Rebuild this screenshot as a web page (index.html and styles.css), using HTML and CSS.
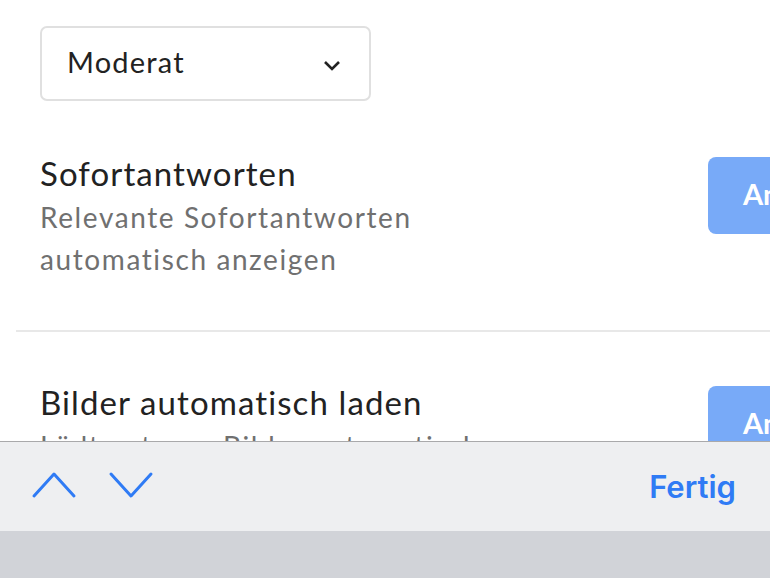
FILE: index.html
```html
<!DOCTYPE html>
<html lang="de">
<head>
  <meta charset="UTF-8">
  <meta name="viewport" content="width=device-width, initial-scale=1.0">
  <title>Einstellungen</title>
  <link rel="stylesheet" href="styles.css">
</head>
<body>
  <div class="content">
    <div class="select-box">
      <span>Moderat</span>
      <svg class="caret" width="18" height="12" viewBox="0 0 18 12"><path d="M2 3 L9 10 L16 3" fill="none" stroke="#222" stroke-width="2.6"/></svg>
    </div>
    <div class="settings">
      <div class="setting">
        <div class="setting-text">
          <div class="setting-title">Sofortantworten</div>
          <div class="setting-desc">Relevante Sofortantworten<br>automatisch anzeigen</div>
        </div>
        <button class="toggle">An</button>
      </div>
      <div class="setting divided">
        <div class="setting-text">
          <div class="setting-title">Bilder automatisch laden</div>
          <div class="setting-desc">Lädt externe Bilder automatisch</div>
        </div>
        <button class="toggle">An</button>
      </div>
    </div>
  </div>
  <div class="toolbar">
    <div class="nav-arrows">
      <svg width="46" height="28" viewBox="0 0 46 28"><path d="M3 25 L23 3 L43 25" fill="none" stroke="#2f7bf5" stroke-width="3" stroke-linecap="round" stroke-linejoin="round"/></svg>
      <svg width="46" height="28" viewBox="0 0 46 28"><path d="M3 3 L23 25 L43 3" fill="none" stroke="#2f7bf5" stroke-width="3" stroke-linecap="round" stroke-linejoin="round"/></svg>
    </div>
    <button class="done">Fertig</button>
  </div>
  <div class="keyboard"></div>
</body>
</html>
```

FILE: styles.css
```css
body {
  margin: 0;
  padding: 0;
  width: 770px;
  height: 578px;
  overflow: hidden;
  font-family: Lato, "Open Sans", sans-serif;
  background-color: #fff;
}
.content {
  height: 441px;
  overflow: hidden;
  padding-top: 26px;
  box-sizing: border-box;
}
.select-box {
  margin-left: 40px;
  width: 331px;
  height: 75px;
  box-sizing: border-box;
  border: 2px solid #e0e0e0;
  border-radius: 7px;
  display: flex;
  align-items: center;
  justify-content: space-between;
  padding: 0 28px 0 25px;
  font-size: 29px;
  letter-spacing: 1.2px;
  color: #222;
}
.select-box span {
  margin-top: -4px;
}
.caret {
  margin-top: 2px;
}
.settings {
  margin-left: 16px;
}
.setting {
  display: flex;
  justify-content: space-between;
  align-items: flex-start;
  padding: 52px 0 50px 24px;
}
.setting.divided {
  border-top: 2px solid #e8e8e8;
  padding-top: 50px;
}
.setting-title {
  font-size: 33px;
  line-height: 40px;
  letter-spacing: 1.1px;
  color: #222;
  margin-bottom: 3px;
}
.setting-desc {
  font-size: 28px;
  line-height: 42px;
  letter-spacing: 1.6px;
  color: #707070;
}
.toggle {
  flex-shrink: 0;
  margin-top: 4px;
  margin-right: -68px;
  width: 130px;
  height: 77px;
  border: none;
  border-radius: 8px;
  background-color: #78aaf8;
  color: #fff;
  font-family: Lato, sans-serif;
  font-weight: bold;
  font-size: 29px;
  text-align: left;
  padding: 0 0 5px 35px;
}
.toolbar {
  height: 90px;
  box-sizing: border-box;
  border-top: 1px solid #a9a9ab;
  background-color: #eeeff1;
  display: flex;
  align-items: center;
  justify-content: space-between;
  padding: 0 34px 0 31px;
}
.nav-arrows {
  display: flex;
  gap: 31px;
  margin-top: -3px;
}
.done {
  border: none;
  background: none;
  padding: 0;
  font-family: Inter, Roboto, sans-serif;
  font-weight: 600;
  font-size: 31px;
  color: #2f7bf5;
}
.keyboard {
  height: 47px;
  background-color: #d1d3d8;
}
```
